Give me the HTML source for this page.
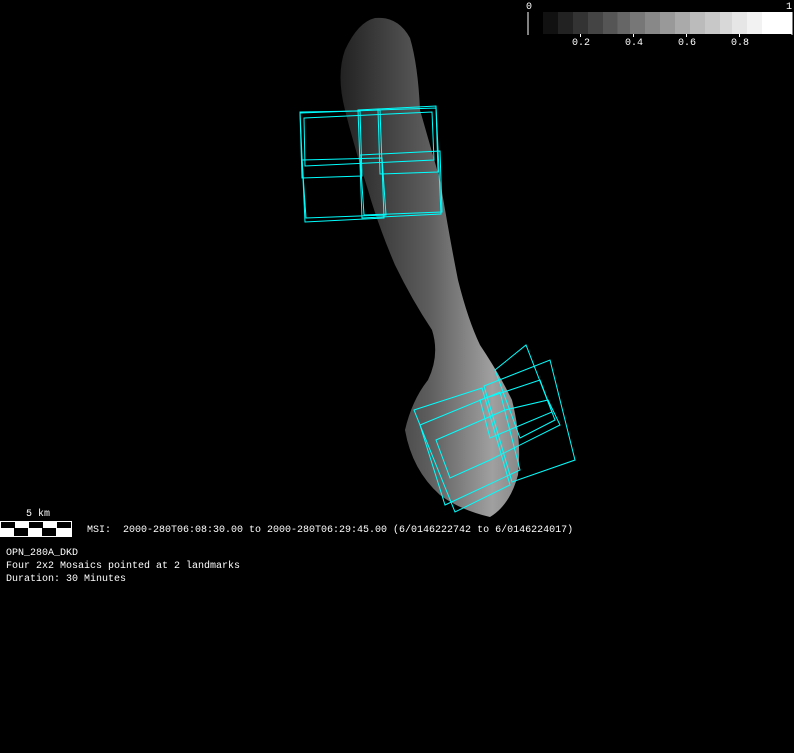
<!DOCTYPE html>
<html><head><style>
body{margin:0;background:#000;width:794px;height:753px;overflow:hidden;position:relative;font-family:"Liberation Mono",monospace;color:#fff}
.t{position:absolute;font-size:10px;white-space:pre;line-height:13px}
</style></head><body>
<svg width="794" height="753" style="position:absolute;left:0;top:0">
<defs>
<linearGradient id="g" x1="0" y1="0" x2="1" y2="0">
<stop offset="0" stop-color="#222"/><stop offset="0.5" stop-color="#5e5e5e"/><stop offset="0.85" stop-color="#a0a0a0"/><stop offset="1" stop-color="#888"/>
</linearGradient>
</defs>
<path d="M375,18 Q398,16 410,38 Q418,65 420,110 L440,180 Q450,240 458,280 Q468,320 480,345 Q500,375 512,400 Q522,440 518,475 Q510,505 490,517 Q460,510 440,495 Q412,470 405,430 Q412,400 428,380 Q440,355 432,330 Q412,300 395,265 Q378,225 368,190 Q355,150 345,110 Q336,75 345,50 Q358,22 375,18Z" fill="url(#g)"/>
<g fill="none" stroke="#0ff" stroke-width="1">
<polygon points="300,113 380,110 384,218 305,222"/>
<polygon points="358,110 436,106 441,214 362,218"/>
<polygon points="302,160 382,158 386,215 306,218"/>
<polygon points="360,155 440,151 442,212 364,215"/>
<polygon points="300,112 360,111 362,176 302,178"/>
<polygon points="378,110 436,108 438,172 380,174"/>
<polygon points="304,118 432,112 434,160 305,166"/>
<polygon points="414,410 482,388 510,485 455,512"/>
<polygon points="484,386 550,360 575,460 512,482"/>
<polygon points="420,425 500,392 520,470 445,505"/>
<polygon points="436,440 505,410 548,400 560,425 490,460 450,478"/>
<polygon points="495,370 526,345 555,420 520,438"/>
<polygon points="480,400 540,380 552,412 490,438"/>
</g>
<line x1="528" y1="12" x2="528" y2="35" stroke="#fff"/>
<line x1="792" y1="12" x2="792" y2="35" stroke="#fff"/>
</svg>
<div style="position:absolute;left:543px;top:12px;width:249px;height:22px;background:linear-gradient(90deg,#111 0,#111 6%,#222 6%,#222 12%,#333 12%,#333 18%,#444 18%,#444 24%,#555 24%,#555 30%,#666 30%,#666 35%,#777 35%,#777 41%,#888 41%,#888 47%,#999 47%,#999 53%,#aaa 53%,#aaa 59%,#bbb 59%,#bbb 65%,#c8c8c8 65%,#c8c8c8 71%,#d8d8d8 71%,#d8d8d8 76%,#e6e6e6 76%,#e6e6e6 82%,#f2f2f2 82%,#f2f2f2 88%,#fff 88%)"></div>
<div style="position:absolute;left:580px;top:34px;width:1px;height:3px;background:#fff"></div>
<div style="position:absolute;left:633px;top:34px;width:1px;height:3px;background:#fff"></div>
<div style="position:absolute;left:686px;top:34px;width:1px;height:3px;background:#fff"></div>
<div style="position:absolute;left:739px;top:34px;width:1px;height:3px;background:#fff"></div>
<div class="t" style="left:526px;top:1px">0</div>
<div class="t" style="left:786px;top:1px">1</div>
<div class="t" style="left:572px;top:37px">0.2</div>
<div class="t" style="left:625px;top:37px">0.4</div>
<div class="t" style="left:678px;top:37px">0.6</div>
<div class="t" style="left:731px;top:37px">0.8</div>
<div class="t" style="left:26px;top:508px">5 km</div>
<div style="position:absolute;left:0;top:521px;width:70px;height:14px;border:1px solid #fff;background:linear-gradient(90deg,#000 0 14px,#fff 14px 28px,#000 28px 42px,#fff 42px 56px,#000 56px);"></div>
<div style="position:absolute;left:0;top:528px;width:72px;height:8px;background:linear-gradient(90deg,#fff 0 14px,#000 14px 28px,#fff 28px 42px,#000 42px 56px,#fff 56px);"></div>
<div class="t" style="left:87px;top:524px">MSI:  2000-280T06:08:30.00 to 2000-280T06:29:45.00 (6/0146222742 to 6/0146224017)</div>
<div class="t" style="left:6px;top:547px">OPN_280A_DKD
Four 2x2 Mosaics pointed at 2 landmarks
Duration: 30 Minutes</div>
</body></html>
